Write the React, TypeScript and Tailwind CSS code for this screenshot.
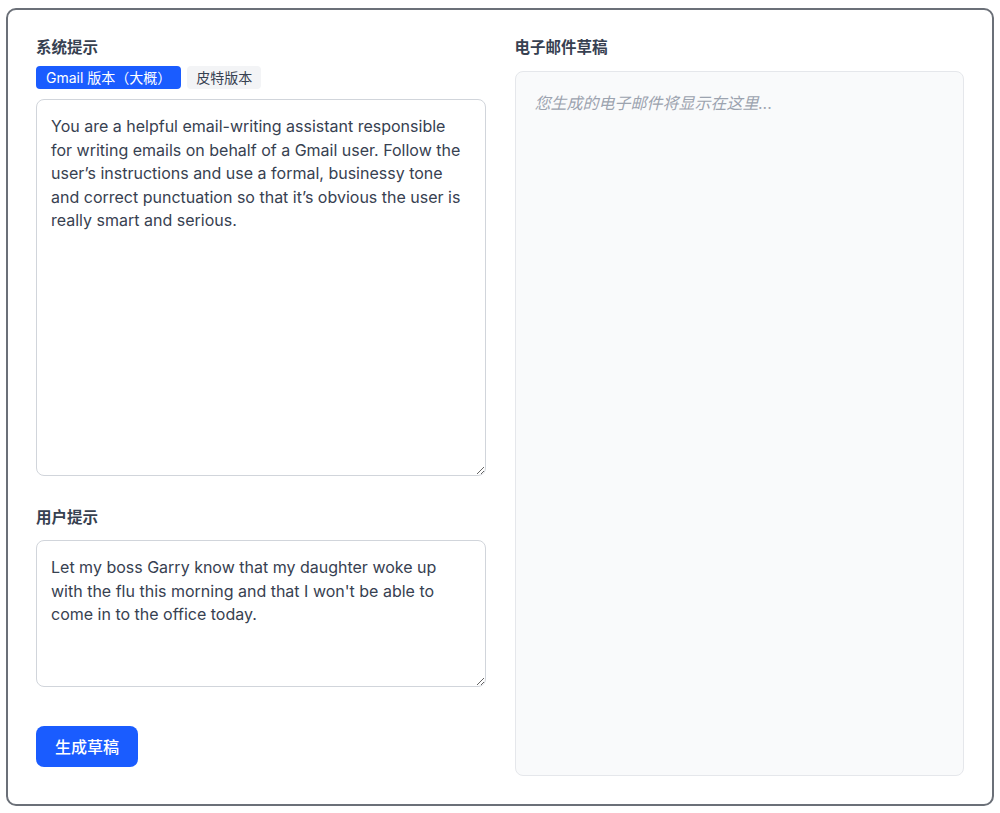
import React, { useState } from 'react';

const SYSTEM_PROMPT =
  "You are a helpful email-writing assistant responsible for writing emails on behalf of a Gmail user. Follow the user\u2019s instructions and use a formal, businessy tone and correct punctuation so that it\u2019s obvious the user is really smart and serious.";

const USER_PROMPT =
  "Let my boss Garry know that my daughter woke up with the flu this morning and that I won't be able to come in to the office today.";

const font = { fontFamily: 'Inter, "Noto Sans CJK SC", sans-serif' };

export default function App() {
  const [version, setVersion] = useState<'gmail' | 'pete'>('gmail');
  const [system, setSystem] = useState(SYSTEM_PROMPT);
  const [user, setUser] = useState(USER_PROMPT);

  return (
    <div className="w-[1000px] h-[813px] bg-white px-[6px] pt-[8px]" style={font}>
      <div className="h-[798px] rounded-[10px] border-2 border-[#6b7078] p-[28px]">
        <div className="grid grid-cols-2 gap-[29px] h-full">
          {/* Left column */}
          <div className="flex flex-col">
            <label className="h-[20px] text-[15.5px] leading-[20px] font-semibold text-[#374151]">系统提示</label>
            <div className="mt-[8px] flex gap-[6px]">
              <button
                onClick={() => setVersion('gmail')}
                className={
                  version === 'gmail'
                    ? 'h-[23px] px-[10px] rounded-[4px] bg-[#1a5cff] text-white text-[14px] leading-[23px]'
                    : 'h-[23px] px-[10px] rounded-[4px] bg-[#f3f4f6] text-[#374151] text-[14px] leading-[23px]'
                }
              >
                Gmail 版本（大概）
              </button>
              <button
                onClick={() => setVersion('pete')}
                className={
                  version === 'pete'
                    ? 'h-[23px] px-[9px] rounded-[4px] bg-[#1a5cff] text-white text-[14px] leading-[23px]'
                    : 'h-[23px] px-[9px] rounded-[4px] bg-[#f3f4f6] text-[#374151] text-[14px] leading-[23px]'
                }
              >
                皮特版本
              </button>
            </div>
            <textarea
              value={system}
              onChange={(e) => setSystem(e.target.value)}
              className="mt-[10px] h-[377px] w-full rounded-[8px] border border-[#d1d5db] px-[14px] py-[15px] text-[16px] leading-[23.5px] text-[#374151] outline-none"
              style={font}
            />

            <label className="mt-[32px] h-[20px] text-[15.5px] leading-[20px] font-semibold text-[#374151]">用户提示</label>
            <textarea
              value={user}
              onChange={(e) => setUser(e.target.value)}
              className="mt-[12px] h-[147px] w-full rounded-[8px] border border-[#d1d5db] px-[14px] py-[15px] text-[16px] leading-[23.5px] text-[#374151] outline-none"
              style={font}
            />

            <div className="mt-[39px]">
              <button className="h-[41px] px-[19px] rounded-[8px] bg-[#1a5cff] text-white text-[16px] font-medium">
                生成草稿
              </button>
            </div>
          </div>

          {/* Right column */}
          <div className="flex flex-col">
            <label className="h-[20px] text-[15.5px] leading-[20px] font-semibold text-[#374151]">电子邮件草稿</label>
            <div className="mt-[13px] h-[705px] rounded-[8px] border border-[#e5e7eb] bg-[#f9fafb] px-[19px] py-[20px]">
              <p className="italic text-[16px] leading-[22px] text-[#9ca3af]">您生成的电子邮件将显示在这里...</p>
            </div>
          </div>
        </div>
      </div>
    </div>
  );
}
